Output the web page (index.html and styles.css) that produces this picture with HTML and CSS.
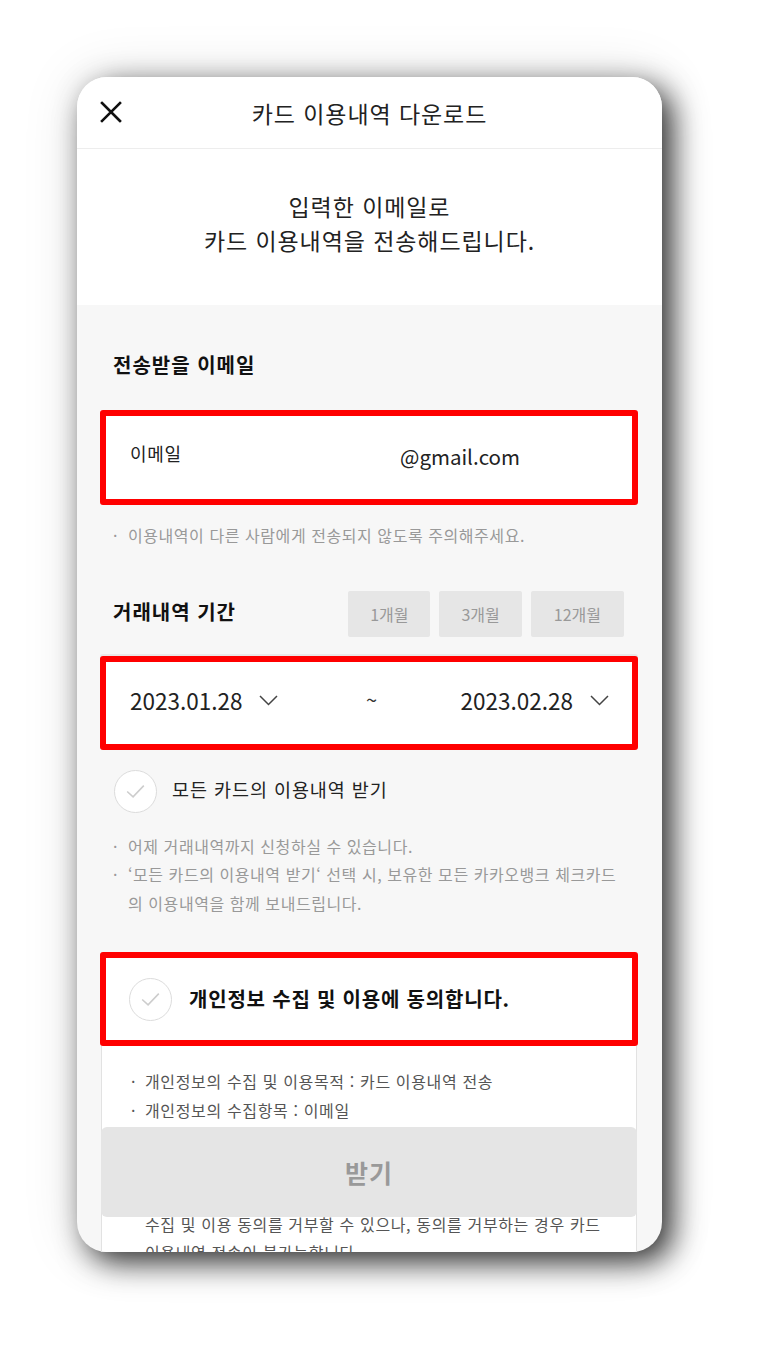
FILE: index.html
```html
<!DOCTYPE html>
<html lang="ko">
<head>
<meta charset="utf-8">
<title>카드 이용내역 다운로드</title>
<link rel="stylesheet" href="styles.css">
</head>
<body>
<div class="phone">
  <header class="topbar">
    <button class="close" aria-label="닫기">
      <svg width="22" height="22" viewBox="0 0 22 22"><path d="M2 2 L20 20 M20 2 L2 20" stroke="#111" stroke-width="2.6" stroke-linecap="square" fill="none"/></svg>
    </button>
    <h1 class="title">카드 이용내역 다운로드</h1>
    <span class="spacer"></span>
  </header>

  <section class="intro">
    <p>입력한 이메일로<br>카드 이용내역을 전송해드립니다.</p>
  </section>

  <main class="content">
    <h2 class="heading first">전송받을 이메일</h2>
    <div class="box email-box">
      <span class="email-label">이메일</span>
      <span class="email-value">@gmail.com</span>
    </div>
    <ul class="notes single">
      <li><span class="dot">·</span><span>이용내역이 다른 사람에게 전송되지 않도록 주의해주세요.</span></li>
    </ul>

    <div class="period-row">
      <h2 class="heading">거래내역 기간</h2>
      <div class="period-btns">
        <button class="pbtn">1개월</button>
        <button class="pbtn">3개월</button>
        <button class="pbtn">12개월</button>
      </div>
    </div>

    <div class="box date-box">
      <div class="date">
        <span>2023.01.28</span>
        <svg class="chev" width="19" height="11" viewBox="0 0 19 11"><path d="M1 1 L9.5 9.5 L18 1" stroke="#444" stroke-width="1.5" fill="none"/></svg>
      </div>
      <span class="tilde">~</span>
      <div class="date">
        <span>2023.02.28</span>
        <svg class="chev" width="19" height="11" viewBox="0 0 19 11"><path d="M1 1 L9.5 9.5 L18 1" stroke="#444" stroke-width="1.5" fill="none"/></svg>
      </div>
    </div>

    <label class="check-row">
      <span class="circle">
        <svg width="42" height="42" viewBox="0 0 42 42"><path d="M12.5 21.5 L18.5 27 L29.5 15.5" stroke="#cdcdcd" stroke-width="1.6" fill="none"/></svg>
      </span>
      <span class="check-label">모든 카드의 이용내역 받기</span>
    </label>

    <ul class="notes multi">
      <li><span class="dot">·</span><span>어제 거래내역까지 신청하실 수 있습니다.</span></li>
      <li><span class="dot">·</span><span>‘모든 카드의 이용내역 받기‘ 선택 시, 보유한 모든 카카오뱅크 체크카드<br>의 이용내역을 함께 보내드립니다.</span></li>
    </ul>

    <div class="box agree-box">
      <span class="circle">
        <svg width="42" height="42" viewBox="0 0 42 42"><path d="M12.5 21.5 L18.5 27 L29.5 15.5" stroke="#cdcdcd" stroke-width="1.6" fill="none"/></svg>
      </span>
      <span class="agree-label">개인정보 수집 및 이용에 동의합니다.</span>
    </div>

    <div class="terms">
      <ul class="terms-list">
        <li><span class="dot">·</span><span>개인정보의 수집 및 이용목적 : 카드 이용내역 전송</span></li>
        <li><span class="dot">·</span><span>개인정보의 수집항목 : 이메일</span></li>
        <li><span class="dot">·</span><span>개인정보의 보유 및 이용기간 : 전송 완료 후 즉시 파기</span></li>
        <li><span class="dot">·</span><span>위 개인정보 수집 및 이용에 대한 동의를 거부할 권리가<br>있습니다. 다만, 개인정보의<br>수집 및 이용 동의를 거부할 수 있으나, 동의를 거부하는 경우 카드<br>이용내역 전송이 불가능합니다.</span></li>
      </ul>
    </div>
  </main>

  <button class="submit">받기</button>
</div>
</body>
</html>
```

FILE: styles.css
```css
* { box-sizing: border-box; }

html, body {
  margin: 0;
  padding: 0;
  background: #ffffff;
}

body {
  font-family: "Noto Sans CJK KR", "Noto Sans", sans-serif;
  color: #222;
  min-height: 1350px;
  padding: 77px 0 98px 77px;
}

.phone {
  position: relative;
  width: 585px;
  height: 1175px;
  border-radius: 30px;
  overflow: hidden;
  background: #f7f7f7;
  box-shadow: 10px 10px 30px rgba(0, 0, 0, 0.8), 0 0 55px rgba(0, 0, 0, 0.13);
}

.topbar {
  height: 72px;
  background: #fff;
  border-bottom: 1px solid #ededed;
  display: grid;
  grid-template-columns: 44px 1fr 44px;
  align-items: center;
  padding: 0 23px;
}

.close {
  border: 0;
  background: none;
  padding: 0;
  width: 22px;
  height: 22px;
  display: block;
  margin-top: -1px;
}

.close svg { display: block; }

.title {
  margin: 0;
  text-align: center;
  font-size: 23px;
  letter-spacing: 0.04em;
  font-weight: 400;
  line-height: 30px;
  color: #222;
}

.intro {
  height: 156px;
  background: #fff;
  display: flex;
  align-items: center;
  justify-content: center;
  padding-bottom: 9px;
}

.intro p {
  margin: 0;
  text-align: center;
  font-size: 23px;
  letter-spacing: 0.04em;
  line-height: 34px;
  color: #222;
}

.content {
  padding: 0 24px 0 23px;
}

.heading {
  margin: 0;
  padding-left: 13px;
  font-size: 20px;
  letter-spacing: 0.05em;
  font-weight: 700;
  line-height: 28px;
  color: #111;
}

.heading.first {
  padding-top: 46px;
}

.box {
  background: #fff;
  border: 6px solid #ff0000;
  border-radius: 3px;
}

.email-box {
  margin-top: 31px;
  height: 95px;
  display: flex;
  align-items: center;
  padding-left: 24px;
  padding-bottom: 4px;
}

.email-label {
  flex: 0 0 270px;
  font-size: 18px;
  letter-spacing: 0.04em;
  line-height: 26px;
  color: #222;
  padding-bottom: 6px;
}

.email-value {
  font-size: 20.5px;
  line-height: 28px;
  color: #222;
}

.notes {
  list-style: none;
  margin: 0;
  padding: 0 0 0 13px;
  font-size: 16px;
  letter-spacing: 0.035em;
  line-height: 28.5px;
  color: #999;
}

.notes li,
.terms-list li {
  display: flex;
}

.dot {
  flex: 0 0 15px;
  letter-spacing: 0;
}

.notes.single {
  margin-top: 16px;
}

.period-row {
  margin-top: 41px;
  display: flex;
  align-items: center;
  justify-content: space-between;
  padding-right: 14px;
}

.period-row .heading {
  padding-bottom: 4px;
}

.period-btns {
  display: flex;
  gap: 9px;
}

.pbtn {
  height: 46px;
  padding: 0 22px;
  border: 0;
  border-radius: 2px;
  background: #e6e6e6;
  font-family: inherit;
  font-size: 16px;
  color: #999;
}

.pbtn:last-child {
  padding: 0 23px;
}

.date-box {
  margin-top: 19px;
  height: 94px;
  display: flex;
  align-items: center;
  justify-content: space-between;
  padding: 0 23px 6px 24px;
  box-shadow: 0 -2px 0 #e9e9e9;
}

.date {
  display: flex;
  align-items: center;
  gap: 17px;
  font-size: 22.5px;
  line-height: 30px;
  color: #222;
}

.chev {
  display: block;
  margin-top: 2px;
}

.tilde {
  font-size: 20px;
  line-height: 24px;
  color: #333;
  margin-left: 4px;
}

.check-row {
  margin-top: 20px;
  padding-left: 14px;
  display: flex;
  align-items: center;
  gap: 15px;
}

.circle {
  flex: 0 0 43px;
  width: 43px;
  height: 43px;
  border: 1px solid #dcdcdc;
  border-radius: 50%;
  background: #fff;
  display: flex;
  align-items: center;
  justify-content: center;
}

.circle svg { display: block; }

.check-label {
  font-size: 18.5px;
  letter-spacing: 0.05em;
  line-height: 26px;
  color: #222;
  padding-bottom: 4px;
}

.notes.multi {
  margin-top: 19px;
}

.agree-box {
  margin-top: 35px;
  height: 94px;
  display: flex;
  align-items: center;
  gap: 17px;
  padding-left: 23px;
}

.agree-label {
  font-size: 20px;
  letter-spacing: 0.04em;
  font-weight: 700;
  line-height: 28px;
  color: #111;
}

.terms {
  margin: 0 1px;
  background: #fff;
  border-left: 1px solid #e2e2e2;
  border-right: 1px solid #e2e2e2;
  padding: 21px 0 40px 29px;
}

.terms-list {
  list-style: none;
  margin: 0;
  padding: 0;
  font-size: 16px;
  letter-spacing: 0.04em;
  line-height: 28.5px;
  color: #555;
}

.terms-list .dot {
  flex-basis: 14px;
}

.submit {
  position: absolute;
  left: 24px;
  right: 25px;
  bottom: 35px;
  height: 90px;
  border: 0;
  border-radius: 6px;
  background: #e5e5e5;
  font-family: inherit;
  font-size: 25px;
  letter-spacing: 0.04em;
  font-weight: 700;
  color: #999;
}
```
